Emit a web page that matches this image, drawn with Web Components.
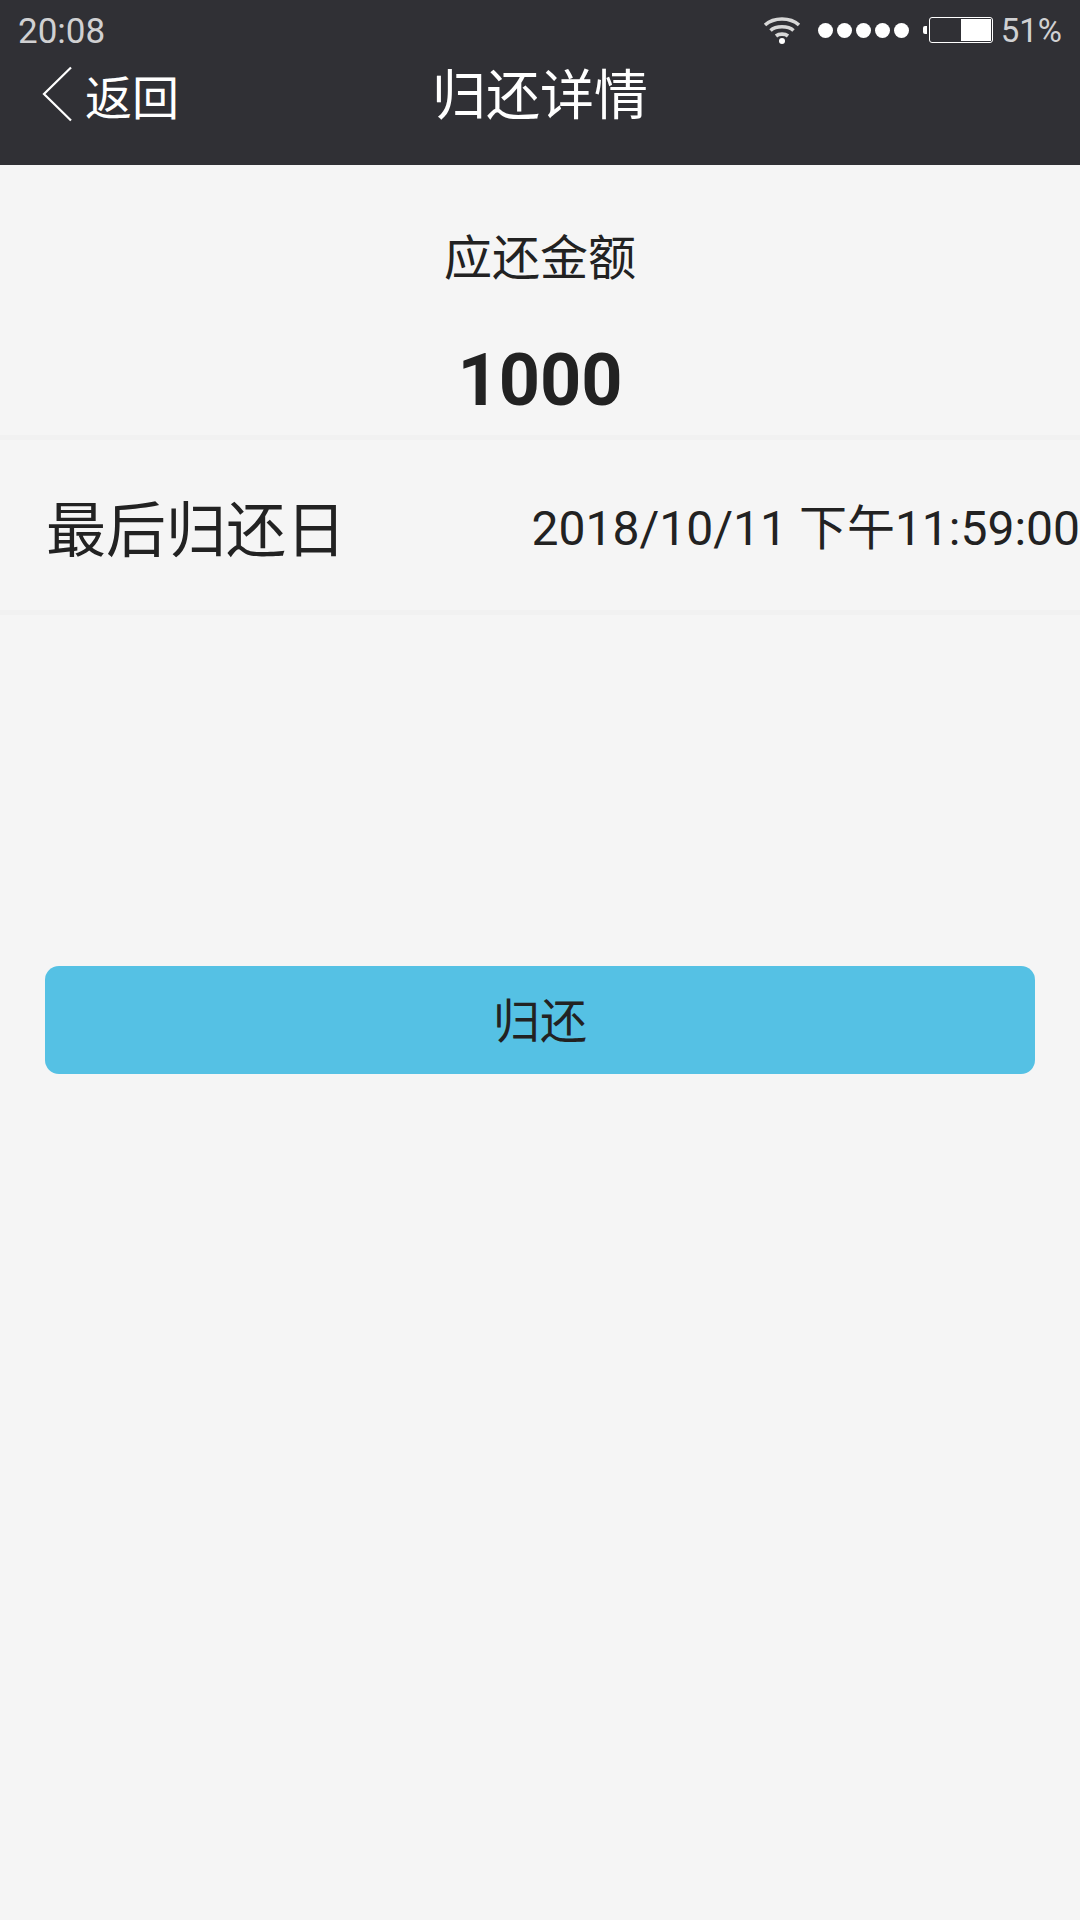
<!DOCTYPE html>
<html>
<head>
<meta charset="utf-8">
<style>
  html, body { margin: 0; padding: 0; background: #f5f5f5; }
  body { width: 1080px; height: 1920px; overflow: hidden; font-family: Roboto, "Noto Sans CJK SC", sans-serif; }
</style>
</head>
<body>
<return-page></return-page>

<script>
const CJK = 'Roboto, "Noto Sans CJK SC", sans-serif'

class StatusBar extends HTMLElement {
  constructor() {
    super()
    this.attachShadow({ mode: 'open' })
  }
  connectedCallback() {
    this.shadowRoot.innerHTML = /*html*/`
    <style>
      :host { display: flex; align-items: center; justify-content: space-between; height: 60px; padding: 0 18px 0 18px; color: #d0d0d2; font: 33px ${CJK}; }
      .time { font-size: 35px; margin-top: 2px; }
      .right { display: flex; align-items: center; }
      .dots { display: flex; gap: 4px; margin: 0 14px 0 17px; }
      .dots i { width: 15px; height: 15px; border-radius: 50%; background: #fff; }
      .nub { width: 4px; height: 8px; background: #fff; border-radius: 2px 0 0 2px; margin-right: 2px; }
      .battery { box-sizing: border-box; width: 64px; height: 26px; padding: 1px; border: 1.5px solid #fff; border-radius: 3px; display: flex; justify-content: flex-end; margin-right: 8px; }
      .battery b { width: 30px; background: #fff; }
      svg { display: block; }
    </style>
    <span class="time">20:08</span>
    <div class="right">
      <svg width="38" height="28" viewBox="0 0 38 28" fill="none" stroke="#d8d8d8" stroke-width="3.6">
        <path d="M2 9C11 1 27 1 36 9"/>
        <path d="M7.5 14.5C13 9.5 25 9.5 30.5 14.5"/>
        <path d="M13 20C16 17.5 22 17.5 25 20"/>
        <circle cx="19" cy="25" r="3" fill="#fff" stroke="none"/>
      </svg>
      <div class="dots"><i></i><i></i><i></i><i></i><i></i></div>
      <div class="nub"></div>
      <div class="battery"><b></b></div>
      <span>51%</span>
    </div>
    `
  }
}

class NavBar extends HTMLElement {
  constructor() {
    super()
    this.attachShadow({ mode: 'open' })
  }
  connectedCallback() {
    this.shadowRoot.innerHTML = /*html*/`
    <style>
      :host { display: grid; grid-template-columns: 1fr auto 1fr; align-items: center; height: 70px; padding-bottom: 35px; color: #fff; }
      .back { display: flex; align-items: center; padding-left: 42px; gap: 13px; font-size: 47px; }
      .back span { margin-top: -2px; }
      .title { font-size: 54px; margin-top: -8px; }
      svg { display: block; margin-top: -4px; }
    </style>
    <div class="back">
      <svg width="30" height="56" viewBox="0 0 30 56" fill="none" stroke="#fff" stroke-width="2.2"><path d="M29 1.5L2 28L29 54.5"/></svg>
      <span>返回</span>
    </div>
    <div class="title"><slot></slot></div>
    <div></div>
    `
  }
}

class AmountBox extends HTMLElement {
  constructor() {
    super()
    this.attachShadow({ mode: 'open' })
  }
  connectedCallback() {
    this.shadowRoot.innerHTML = /*html*/`
    <style>
      :host { display: flex; flex-direction: column; align-items: center; height: 270px; color: #222; }
      .label { font-size: 48px; line-height: 56px; margin-top: 66px; }
      .value { font-size: 72px; font-weight: 700; line-height: 84px; margin-top: 52px; }
    </style>
    <div class="label">${this.getAttribute('label')}</div>
    <div class="value">${this.getAttribute('value')}</div>
    `
  }
}

class DateRow extends HTMLElement {
  constructor() {
    super()
    this.attachShadow({ mode: 'open' })
  }
  connectedCallback() {
    this.shadowRoot.innerHTML = /*html*/`
    <style>
      :host { display: flex; align-items: center; justify-content: space-between; height: 170px; padding-left: 46px; color: #222; border-top: 5px solid #f1f1f1; border-bottom: 5px solid #f1f1f1; white-space: nowrap; }
      .name { font-size: 60px; }
      .date { font-size: 48px; margin-top: -2px; }
    </style>
    <div class="name">${this.getAttribute('name')}</div>
    <div class="date">${this.getAttribute('date')}</div>
    `
  }
}

class BigButton extends HTMLElement {
  constructor() {
    super()
    this.attachShadow({ mode: 'open' })
  }
  connectedCallback() {
    this.shadowRoot.innerHTML = /*html*/`
    <style>
      :host { display: flex; align-items: center; justify-content: center; box-sizing: border-box; height: 108px; padding-bottom: 6px; margin: 351px 45px 0; background: #55c1e4; border-radius: 14px; color: #222; font-size: 47px; }
    </style>
    <slot></slot>
    `
  }
}

class ReturnPage extends HTMLElement {
  constructor() {
    super()
    this.attachShadow({ mode: 'open' })
  }
  connectedCallback() {
    this.shadowRoot.innerHTML = /*html*/`
    <style>
      :host { display: block; height: 1920px; background: #f5f5f5; font-family: ${CJK}; }
      header { background: #303035; }
    </style>
    <header>
      <status-bar></status-bar>
      <nav-bar>归还详情</nav-bar>
    </header>
    <amount-box label="应还金额" value="1000"></amount-box>
    <date-row name="最后归还日" date="2018/10/11 下午11:59:00"></date-row>
    <big-button>归还</big-button>
    `
  }
}

customElements.define('status-bar', StatusBar)
customElements.define('nav-bar', NavBar)
customElements.define('amount-box', AmountBox)
customElements.define('date-row', DateRow)
customElements.define('big-button', BigButton)
customElements.define('return-page', ReturnPage)
</script>
</body>
</html>
